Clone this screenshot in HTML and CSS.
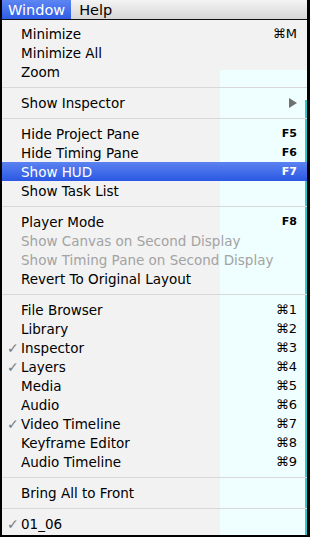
FILE: index.html
```html
<!DOCTYPE html>
<html>
<head>
<meta charset="utf-8">
<link rel="stylesheet" href="styles.css">
</head>
<body>
<div class="screen">
  <div class="menubar">
    <span class="mb-item active">Window</span>
    <span class="mb-item">Help</span>
  </div>
  <div class="menu">
    <div class="row"><span class="label">Minimize</span><span class="key">⌘M</span></div>
    <div class="row"><span class="label">Minimize All</span></div>
    <div class="row"><span class="label">Zoom</span></div>
    <div class="sep"></div>
    <div class="row"><span class="label">Show Inspector</span><span class="arrow"></span></div>
    <div class="sep"></div>
    <div class="row"><span class="label">Hide Project Pane</span><span class="key fn">F5</span></div>
    <div class="row"><span class="label">Hide Timing Pane</span><span class="key fn">F6</span></div>
    <div class="row hl"><span class="label">Show HUD</span><span class="key fn">F7</span></div>
    <div class="row"><span class="label">Show Task List</span></div>
    <div class="sep"></div>
    <div class="row"><span class="label">Player Mode</span><span class="key fn">F8</span></div>
    <div class="row dis"><span class="label">Show Canvas on Second Display</span></div>
    <div class="row dis"><span class="label">Show Timing Pane on Second Display</span></div>
    <div class="row"><span class="label">Revert To Original Layout</span></div>
    <div class="sep"></div>
    <div class="row"><span class="label">File Browser</span><span class="key">⌘1</span></div>
    <div class="row"><span class="label">Library</span><span class="key">⌘2</span></div>
    <div class="row"><span class="check">✓</span><span class="label">Inspector</span><span class="key">⌘3</span></div>
    <div class="row"><span class="check">✓</span><span class="label">Layers</span><span class="key">⌘4</span></div>
    <div class="row"><span class="label">Media</span><span class="key">⌘5</span></div>
    <div class="row"><span class="label">Audio</span><span class="key">⌘6</span></div>
    <div class="row"><span class="check">✓</span><span class="label">Video Timeline</span><span class="key">⌘7</span></div>
    <div class="row"><span class="label">Keyframe Editor</span><span class="key">⌘8</span></div>
    <div class="row"><span class="label">Audio Timeline</span><span class="key">⌘9</span></div>
    <div class="sep"></div>
    <div class="row"><span class="label">Bring All to Front</span></div>
    <div class="sep"></div>
    <div class="row"><span class="check">✓</span><span class="label">01_06</span></div>
  </div>
</div>
</body>
</html>
```
FILE: styles.css
```css
html, body {
  margin: 0;
  padding: 0;
  background: #000;
}
body {
  width: 310px;
  height: 537px;
  overflow: hidden;
  font-family: "DejaVu Sans", "Liberation Sans", sans-serif;
}
.screen {
  margin: 0 3px 0 2px;
  height: 535px;
  display: flex;
  flex-direction: column;
}
.menubar {
  height: 19px;
  border-bottom: 1px solid #111;
  background: linear-gradient(#f4f4f4, #d6d6d6);
  display: flex;
  align-items: stretch;
  flex: none;
}
.mb-item {
  display: flex;
  align-items: center;
  padding: 0 8px 0 8px;
  font-size: 14.5px;
  color: #000;
}
.active {
  background: linear-gradient(#5d86f2, #2f5de6);
  color: #fff;
  padding: 0 6px 0 6px;
}
.menu {
  flex: 1;
  padding-top: 4px;
  background:
    linear-gradient(#2ccaca, #2ccaca) no-repeat 303px 80px / 2px 100%,
    linear-gradient(#effefe, #effefe) no-repeat 218px 50px / 100% 100%,
    #f2f2f2;
}
.row {
  height: 19px;
  display: flex;
  align-items: center;
  padding: 0 10px 0 19px;
  position: relative;
  font-size: 13.5px;
  color: #000;
}
.label {
  flex: 1;
  white-space: nowrap;
}
.key {
  font-size: 13px;
}
.fn {
  font-weight: bold;
  font-size: 11px;
}
.check {
  position: absolute;
  left: 5px;
  color: #7a7a7a;
  font-size: 14px;
}
.dis {
  color: #a3a3a3;
}
.hl {
  background: linear-gradient(#5b82f1, #2b58e3);
  color: #fff;
}
.sep {
  height: 12px;
  display: flex;
  align-items: center;
}
.sep::before {
  content: "";
  flex: 1;
  height: 1px;
  background: #d8d8d8;
}
.arrow {
  width: 0;
  height: 0;
  border-left: 8px solid #707070;
  border-top: 5px solid transparent;
  border-bottom: 5px solid transparent;
  margin-right: 0;
}
```
